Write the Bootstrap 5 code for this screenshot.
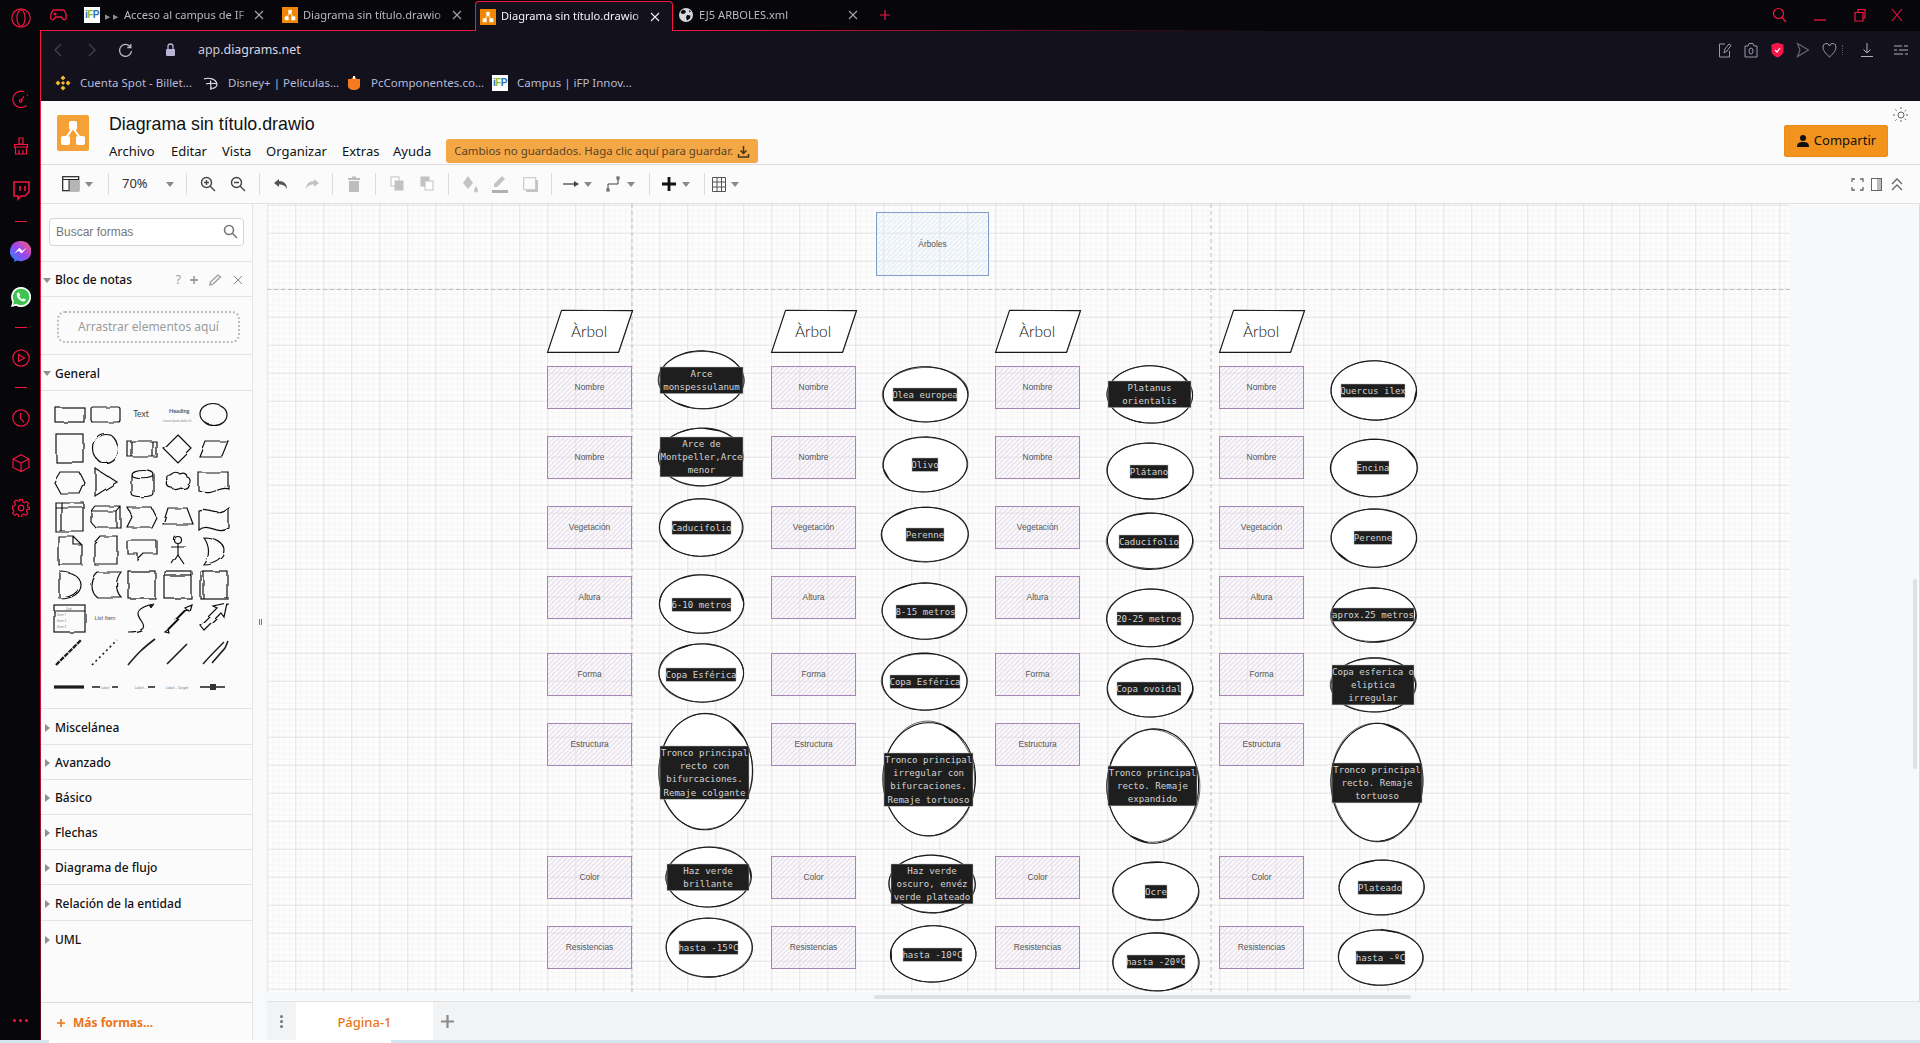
<!DOCTYPE html>
<html lang="es">
<head>
<meta charset="utf-8">
<title>Diagrama sin título.drawio</title>
<link href="https://cdn.jsdelivr.net/npm/bootstrap@5.3.0/dist/css/bootstrap.min.css" rel="stylesheet">
<style>
html,body{height:1043px;overflow:hidden;background:#fff}
body{font-family:"Noto Sans","Liberation Sans",sans-serif;color:#111;font-size:12px}
svg{display:block;flex:none}
.x-shell{height:1040px}
.x-rail{width:41px;flex:none;background:#07060b;position:relative;color:#f0163f}
.x-rail::after{content:"";position:absolute;top:30px;bottom:0;right:0;width:1px;background:linear-gradient(#f5163f,#f5163f 55%,#5a0a1c)}
.x-logo{height:36px;margin-bottom:40px}
.x-ri{height:45px}
.x-ri2{margin-bottom:2px}
.x-rd{height:15px}
.x-rd1{height:16px}
.x-rd i,.x-rd1 i{display:block;width:12px;height:1px;background:#f0163f}
.x-rdots{height:40px;letter-spacing:1px}
.x-rdots i{display:block;width:3px;height:3px;border-radius:50%;background:#f0163f;margin:0 1.5px}
.x-main{min-width:0}
.x-tabbar{height:31px;flex:none;background-color:#07060b;background-image:linear-gradient(90deg,#f5163f 0,#f5163f 640px,#07060b 1230px);background-size:100% 1px;background-position:0 30px;background-repeat:no-repeat;color:#b9b9c4}
.x-game{width:38px;padding-left:9px}
.x-tb{width:198px;height:30px;padding-left:5px;font-size:11.1px;white-space:nowrap}
.x-tb.x-on{margin-top:1px;height:30px;background:#12111c;border:1px solid #f5163f;border-bottom:0;border-radius:4px 4px 0 0;color:#f4f4f8;padding-left:4px}
.x-tbt{width:148px;margin-left:5px;overflow:hidden;-webkit-mask-image:linear-gradient(90deg,#000 132px,transparent 146px);mask-image:linear-gradient(90deg,#000 132px,transparent 146px)}
.x-fav{width:16px;height:16px;flex:none}
.x-ifp{background:#fff;font:700 10px/16px "Liberation Sans",sans-serif;text-align:center;letter-spacing:-.5px;color:#2a6fc0}
.x-ifp b{color:#86c02c}
.x-arr{color:#8d8d96;font-size:7px;letter-spacing:3px;margin-right:3px}
.x-x{width:12px;margin-left:0}
.x-addr{height:38px;flex:none;background:#12111c;color:#c9c8d6;font-size:12.4px}
.x-w34{width:34px}.x-w33{width:33px}.x-w26{width:26px}
.x-book{height:32px;flex:none;background:#12111c;color:#b7bbd8;font-size:11.5px;padding:0 0 4px 14px}
.x-bk{white-space:nowrap;gap:9px}
.x-bk1{width:148px}.x-bk2{width:143px}.x-bk3{width:146px}
.x-head{height:64px;flex:none;background:#fbfbfb;padding-left:16px;position:relative;border-bottom:1px solid #dcdcdc}
.x-dlogo{width:32px;height:36px;margin-top:14px}
.x-title{font:400 17.8px/24px "Liberation Sans",sans-serif;margin-top:11px;color:#111;height:24px}
.x-menu{height:26px;margin-top:3px;font-size:13px}
.x-menu span{white-space:nowrap}
.x-save{background:#f3a745;color:#5a4326;border:0;border-radius:3px;height:24px;padding:0 8px;font-size:11.4px;line-height:24px;margin-top:-2px;margin-left:15px;white-space:nowrap}
.x-share{background:#f2931e;color:#111;border:1px solid #e88c18;border-radius:2px;width:104px;height:32px;font-size:13px;padding:0;margin:24px 32px 0 0}
.x-share:hover{background:#f2931e;color:#111}
.x-sun{position:absolute;right:10px;top:5px}
.x-toolb{height:39px;flex:none;background:#fbfbfb;padding-left:20px;border-bottom:1px solid #e1e1e1;color:#333}
.x-ta{width:47px;padding-left:1px}
.x-z{width:78px;font-size:13px;color:#333}
.x-grp{padding:0 6px;height:22px;border-left:1px solid #dcdcdc}
.x-ic{width:30px;height:22px}
.x-dd{width:0;height:0;border-left:4px solid transparent;border-right:4px solid transparent;border-top:5px solid #8a8a8a;margin-left:5px}
.x-right{margin-left:auto;padding-right:13px;gap:0}
.x-rc{width:20px}
.x-side{width:212px;flex:none;background:#fbfbfb;border-right:1px solid #e4e4e4}
.x-sect{height:58px;padding:14px 8px 0;border-bottom:1px solid #e4e4e4}
.x-search{position:relative}
.x-search .form-control{height:28px;font:12px "Liberation Sans",sans-serif;padding:0 6px;border-color:#d5d5d5;border-radius:4px;background:#fff;color:#777}
.x-search .form-control::placeholder{color:#777}
.x-search svg{position:absolute;right:6px;top:6px}
.x-sh{height:35px;padding:2px 0 0 2px;border-bottom:1px solid #e4e4e4;font-size:12px;font-weight:500;color:#111}
.x-tri{width:0;height:0;border-left:4px solid transparent;border-right:4px solid transparent;border-top:5px solid #8f8f8f;margin-right:4px;flex:none}
.x-tr2{width:0;height:0;border-top:4px solid transparent;border-bottom:4px solid transparent;border-left:5px solid #8f8f8f;margin-right:5px;margin-left:1px}
.x-notes{height:58px;padding:14px 12px 0 16px;border-bottom:1px solid #e4e4e4}
.x-drop{height:32px;border:2px dotted #bdbdbd;border-radius:8px;color:#9b9b9b;font:12px/28px "Noto Sans",sans-serif;text-align:center}
.x-shapes{height:318px;border-bottom:1px solid #e4e4e4}
.x-list .list-group-item{background:transparent;padding:2px 0 0 3px;height:35px;border-color:#e4e4e4;border-width:0 0 1px;font-size:12px;font-weight:500;color:#111}
.x-h36{height:36px!important}
.x-more{height:38px;margin-top:auto;border-top:1px solid #dcdcdc;color:#e8751a;font-weight:700;font-size:12px;padding:2px 0 0 15px;gap:7px}
.x-gut{width:14px;flex:none;background:#f8f9fa}
.x-hnd{width:3px;height:6px;border-left:1px solid #777;border-right:1px solid #777;margin-top:-1px}
.x-work{min-width:0}
.x-area{height:798px;background:#f7f8fa;position:relative;border-bottom:1px solid #e2e2e2}
.x-sbh{position:absolute;left:607px;width:537px;top:791px;height:4px;background:#dfe0e2;border-radius:2px}
.x-sbv{position:absolute;left:1646px;top:375px;width:4px;height:190px;background:#dfe0e2;border-radius:2px}
.x-redge{position:absolute;left:1652px;top:0;bottom:0;width:1px;background:#dcdcdc}
.x-pages{height:38px;background:#f1f3f5}
.x-pd{width:29px;gap:2px}
.x-pd i{display:block;width:3px;height:3px;background:#777;border-radius:50%}
.x-page{width:137px;background:#fff;color:#e8751a;font-weight:500;font-size:13px;padding-top:3px}
.x-pp{width:29px;color:#8a8a8a}
.x-strip{height:3px;background:linear-gradient(90deg,#d3e6ee 49px,#fff 49px,#fff 391px,#d3e6ee 391px)}
</style>
</head>
<body>
<svg width="0" height="0" style="position:absolute"><defs>
<symbol id="dio" viewBox="0 0 32 36"><path fill="none" stroke="#fff" stroke-width="2" d="M16 13 8 24M16 13l8 11"/><rect x="12" y="6" width="8" height="9" rx="2" fill="#fff"/><rect x="4" y="21" width="9" height="9" rx="2" fill="#fff"/><rect x="19" y="21" width="9" height="9" rx="2" fill="#fff"/></symbol>
</defs></svg>
<div class="d-flex x-shell">
 <aside class="x-rail d-flex flex-column align-items-center">
  <div class="x-logo d-flex align-items-center justify-content-center"><svg width="20" height="20" viewBox="0 0 20 20" fill="none" stroke="currentColor" stroke-width="1.2"><circle cx="10" cy="10" r="9.2"/><ellipse cx="10" cy="10" rx="4" ry="8"/></svg></div>
  <div class="x-ri x-ri2 d-flex align-items-center justify-content-center"><svg width="18" height="18" viewBox="0 0 18 18" fill="none" stroke="currentColor" stroke-width="1.2"><path d="M14.5 15.5A8.2 8.2 0 1 1 12 1.7M15 4.5l.8 1.2"/><path d="M9 10.5 12 6"/><circle cx="8.7" cy="10.8" r="1.3"/></svg></div>
  <div class="x-ri d-flex align-items-center justify-content-center"><svg width="16" height="18" viewBox="0 0 16 18" fill="none" stroke="currentColor" stroke-width="1.2"><path d="M6 1h4v6H6zM1.5 7.500h13V10h-13zM2.500 10v7h11v-7M6 13v4M10 13v4"/></svg></div>
  <div class="x-ri d-flex align-items-center justify-content-center"><svg width="18" height="20" viewBox="0 0 18 20" fill="none" stroke="currentColor" stroke-width="1.6"><path d="M2 1h15v10l-4 4H9l-3 3v-3H2zM8 5v5M13 5v5"/></svg></div>
  <div class="x-rd1 d-flex align-items-center"><i></i></div>
  <div class="x-ri d-flex align-items-center justify-content-center"><svg width="21" height="21" viewBox="0 0 20 20"><defs><linearGradient id="ms" x1="0" y1="1" x2="1" y2="0"><stop offset="0" stop-color="#1b8cff"/><stop offset=".5" stop-color="#9b45f0"/><stop offset="1" stop-color="#ff5f6d"/></linearGradient></defs><path fill="url(#ms)" d="M10 0a10 9.600 0 0 0-6 17.300V20l2.700-1.500A10 9.600 0 1 0 10 0z"/><path fill="#fff" d="m4 12 5-5.500 2.800 2.800L16 6.500 11 12 8.300 9.300z"/></svg></div>
  <div class="x-ri d-flex align-items-center justify-content-center"><svg width="20" height="20" viewBox="0 0 20 20"><path fill="#fff" d="M10 0a10 10 0 0 0-8.600 15L0 20l5.200-1.300A10 10 0 1 0 10 0z"/><path fill="#3fc351" d="M10 1.800a8.200 8.200 0 0 0-7 12.500l-.9 3.400 3.500-.9A8.200 8.200 0 1 0 10 1.800z"/><path fill="#fff" d="M7.300 5.500c-.5 0-1.500.7-1.500 2.200 0 3 3.500 6.500 6.700 6.700 1.500 0 2.200-1 2.200-1.900l-2.200-1.200-1 1.100c-1.300-.5-2.600-1.700-3.200-3.100l.9-.9-.9-2.700z"/></svg></div>
  <div class="x-rd1 d-flex align-items-center"><i></i></div>
  <div class="x-ri d-flex align-items-center justify-content-center"><svg width="18" height="18" viewBox="0 0 18 18" fill="none" stroke="currentColor" stroke-width="1.2"><circle cx="9" cy="9" r="8.200"/><path d="M6.500 5.500v7l6-3.500z"/></svg></div>
  <div class="x-rd d-flex align-items-center"><i></i></div>
  <div class="x-ri d-flex align-items-center justify-content-center"><svg width="18" height="18" viewBox="0 0 18 18" fill="none" stroke="currentColor" stroke-width="1.200"><circle cx="9" cy="9" r="8.200"/><path d="M8.500 4v5.500l3.500 3.500"/></svg></div>
  <div class="x-ri d-flex align-items-center justify-content-center"><svg width="18" height="18" viewBox="0 0 18 18" fill="none" stroke="currentColor" stroke-width="1.200"><path d="M9 .8 17 5v8.500l-8 4-8-4V5zM1 5l8 4 8-4M9 9v8.500"/></svg></div>
  <div class="x-ri d-flex align-items-center justify-content-center"><svg width="18" height="18" viewBox="0 0 18 18" fill="none" stroke="currentColor" stroke-width="1.200"><circle cx="9" cy="9" r="2.800"/><path d="M7.500 1h3l.4 2.300 1.700.7 2-1.300 2 2.100-1.300 2 .7 1.700L17.500 9v1.500l-2.300.4-.7 1.700 1.300 2-2 2-2-1.300-1.700.7-.4 2.300h-3l-.4-2.300-1.700-.7-2 1.300-2-2 1.300-2-.7-1.700L.5 10.500V7.500l2.300-.4.700-1.700-1.300-2 2-2 2 1.300 1.700-.7z" transform="translate(0 -.3)"/></svg></div>
  <div class="x-rdots mt-auto d-flex align-items-center justify-content-center"><i></i><i></i><i></i></div>
 </aside>
 <div class="x-main d-flex flex-column flex-grow-1">
  <div class="x-tabbar d-flex align-items-start">
   <div class="x-game d-flex align-items-center" style="height:30px"><svg width="17" height="12" viewBox="0 0 17 12" fill="none" stroke="#f0163f" stroke-width="1.300"><path d="M4 1h9c2 0 3.300 4 3.300 7.500 0 2.500-2.300 3-3.500 1.300L11.500 8h-6L4.200 9.800C3 11.500.7 11 .7 8.500.7 5 2 1 4 1z"/><path d="M3.500 5h3M5 3.500v3"/></svg></div>
   <div class="x-tb d-flex align-items-center"><span class="x-fav x-ifp">i<b>F</b>P</span><div class="x-tbt"><span class="x-arr">▶▶</span>Acceso al campus de IF</div><svg class="x-x" height="12" viewBox="0 0 12 12" stroke="#a5a5ad" stroke-width="1.100"><path d="m2 2 8 8M10 2l-8 8"/></svg></div>
   <div class="x-tb d-flex align-items-center"><svg class="x-fav" style="background:#f08705"><use href="#dio"/></svg><div class="x-tbt">Diagrama sin título.drawio</div><svg class="x-x" height="12" viewBox="0 0 12 12" stroke="#a5a5ad" stroke-width="1.100"><path d="m2 2 8 8M10 2l-8 8"/></svg></div>
   <div class="x-tb x-on d-flex align-items-center"><svg class="x-fav" style="background:#f08705"><use href="#dio"/></svg><div class="x-tbt">Diagrama sin título.drawio</div><svg class="x-x" height="12" viewBox="0 0 12 12" stroke="#eee" stroke-width="1.100"><path d="m2 2 8 8M10 2l-8 8"/></svg></div>
   <div class="x-tb d-flex align-items-center"><svg class="x-fav" viewBox="0 0 16 16"><circle cx="8" cy="8" r="7" fill="#d8d8de"/><path fill="#07060b" d="M5 2.500 8 4l-1 2.500-3 .5L2.500 5zM9 8l3.500.5-.5 3-3 2-1-3zM11 3l2 1.500-1.500 1z"/></svg><div class="x-tbt">EJ5 ARBOLES.xml</div><svg class="x-x" height="12" viewBox="0 0 12 12" stroke="#a5a5ad" stroke-width="1.100"><path d="m2 2 8 8M10 2l-8 8"/></svg></div>
   <div class="d-flex align-items-center ps-2" style="height:30px"><svg width="12" height="12" viewBox="0 0 12 12" stroke="#f0163f" stroke-width="1.200"><path d="M6 1v10M1 6h10"/></svg></div>
   <div class="ms-auto d-flex align-items-center" style="height:30px;padding-right:6px">
    <div class="d-flex justify-content-center" style="width:40px"><svg width="16" height="16" viewBox="0 0 16 16" fill="none" stroke="#f0163f" stroke-width="1.200"><circle cx="6.500" cy="6.500" r="5"/><path d="m10 10.500 4 4.500"/></svg></div>
    <div class="d-flex justify-content-center" style="width:40px"><svg width="14" height="14" viewBox="0 0 14 14" stroke="#f0163f" stroke-width="1.300"><path d="M1 12h12"/></svg></div>
    <div class="d-flex justify-content-center" style="width:40px"><svg width="14" height="14" viewBox="0 0 14 14" fill="none" stroke="#f0163f" stroke-width="1.200"><path d="M2 4.500h8V13H2zM5 4.500V1.500h7V10h-2"/></svg></div>
    <div class="d-flex justify-content-center" style="width:34px"><svg width="14" height="14" viewBox="0 0 14 14" stroke="#f0163f" stroke-width="1.100"><path d="m2 1 10 12M12 1 2 13"/></svg></div>
   </div>
  </div>
  <div class="x-addr d-flex align-items-center">
   <div class="x-w34 d-flex justify-content-center"><svg width="10" height="16" viewBox="0 0 10 16" fill="none" stroke="#44434f" stroke-width="1.300"><path d="M8 2 2 8l6 6"/></svg></div>
   <div class="x-w34 d-flex justify-content-center"><svg width="10" height="16" viewBox="0 0 10 16" fill="none" stroke="#44434f" stroke-width="1.300"><path d="m2 2 6 6-6 6"/></svg></div>
   <div class="x-w33 d-flex justify-content-center"><svg width="15" height="15" viewBox="0 0 15 15" fill="none" stroke="#b9b8c6" stroke-width="1.300"><path d="M12.500 4A6 6 0 1 0 13.500 8M12.800 1v3.500H9.300"/></svg></div>
   <div class="d-flex justify-content-center" style="width:56px"><svg width="11" height="14" viewBox="0 0 11 14"><path fill="none" stroke="#b8b4d4" stroke-width="1.300" d="M3 6V3.500a2.500 2.500 0 0 1 5 0V6"/><rect x="1" y="6" width="9" height="7" rx="1" fill="#b8b4d4"/></svg></div>
   <div>app.<span style="color:#d9d8e4">diagrams.net</span></div>
   <div class="ms-auto d-flex align-items-center" style="padding-right:2px">
    <div class="x-w26 d-flex justify-content-center"><svg width="14" height="16" viewBox="0 0 14 16" fill="none" stroke="#9a99a8"><path d="M7 2H1.500v13h10V9M6 11l1-4 4-5 2 1.500L9 9z"/></svg></div>
    <div class="x-w26 d-flex justify-content-center"><svg width="14" height="16" viewBox="0 0 14 16" fill="none" stroke="#9a99a8"><path d="M1 4h3l1-2.500h4L10 4h3v11H1z"/><ellipse cx="7" cy="9" rx="2" ry="3"/></svg></div>
    <div class="x-w26 d-flex justify-content-center"><svg width="13" height="16" viewBox="0 0 13 16"><path fill="#f5164a" d="M6.500.8 12.500 2.500V9c0 3-3 5.500-6 6.500-3-1-6-3.500-6-6.500V2.500z"/><path fill="none" stroke="#fff" stroke-width="1.200" d="m4 8 2 2 3-4"/></svg></div>
    <div class="x-w26 d-flex justify-content-center"><svg width="14" height="16" viewBox="0 0 14 16" fill="none" stroke="#666573" stroke-width="1.200"><path d="m1.500 1.500 11 6.500-11 6.500L4 8z"/></svg></div>
    <div class="x-w26 d-flex justify-content-center"><svg width="15" height="16" viewBox="0 0 15 16" fill="none" stroke="#9a99a8"><path d="M7.500 15C3 11 1 8 1 5a3.300 3.300 0 0 1 6.500-1A3.300 3.300 0 0 1 14 5c0 3-2 6-6.500 10z"/></svg></div>
    <div style="width:8px;height:10px;border-left:1px dotted #55545f"></div>
    <div class="x-w34 d-flex justify-content-center"><svg width="14" height="16" viewBox="0 0 14 16" fill="none" stroke="#b0afbc"><path d="M7 1v10M3.500 7.500 7 11l3.500-3.500M1 14.500h12"/></svg></div>
    <div class="x-w34 d-flex justify-content-center"><svg width="14" height="14" viewBox="0 0 14 14" fill="none" stroke="#b0afbc"><path d="M0 3h14M0 7h14M0 11h14"/><path stroke-width="2" stroke="#12111c" d="M9 2v2M4 6v2M10 10v2"/></svg></div>
   </div>
  </div>
  <div class="x-book d-flex align-items-center">
   <div class="x-bk x-bk1 d-flex align-items-center"><svg class="x-fav" viewBox="0 0 16 16" fill="#f3ba2f"><path d="m8 .5 2.500 2.500L8 5.300 5.500 3zM3 5.500 5.300 8 3 10.500.500 8zM13 5.500 15.500 8 13 10.500 10.700 8zM8 6l2 2-2 2-2-2zM8 10.700l2.500 2.300L8 15.500 5.500 13z"/></svg><span>Cuenta Spot - Billet...</span></div>
   <div class="x-bk x-bk2 d-flex align-items-center"><svg class="x-fav" viewBox="0 0 16 16" fill="none" stroke="#e7e7ef" stroke-width="1.100"><path d="M1 4c5-2 12 0 13 5 .5 3-3 5-7 4"/><path d="M7.500 5.500 8 15"/><path d="M3 9c2-1 9-1 11 0"/></svg><span>Disney+ | Películas...</span></div>
   <div class="x-bk x-bk3 d-flex align-items-center"><svg class="x-fav" viewBox="0 0 16 16"><path fill="#f47b20" d="M2 4h3l3-3 3 3h3v7c0 2.500-3 4-6 4s-6-1.500-6-4z"/><path fill="#fff" d="M7 1h2v3H7z"/></svg><span>PcComponentes.co...</span></div>
   <div class="x-bk d-flex align-items-center"><span class="x-fav x-ifp">i<b>F</b>P</span><span>Campus | iFP Innov...</span></div>
  </div>
  <header class="x-head d-flex">
   <svg class="x-dlogo" style="background:#f4a137;border-radius:2px"><use href="#dio"/></svg>
   <div style="margin-left:20px">
    <div class="x-title">Diagrama sin título.drawio</div>
    <div class="x-menu d-flex align-items-center">
     <span style="width:62px">Archivo</span><span style="width:51px">Editar</span><span style="width:44px">Vista</span><span style="width:76px">Organizar</span><span style="width:51px">Extras</span><span>Ayuda</span>
     <button type="button" class="btn x-save d-flex align-items-center gap-1">Cambios no guardados. Haga clic aquí para guardar.<svg width="13" height="13" viewBox="0 0 13 13" fill="none" stroke="#4a3416" stroke-width="1.500"><path d="M6.500 1v7M3.500 5.500l3 3 3-3M1.500 9v3h10V9"/></svg></button>
    </div>
   </div>
   <button type="button" class="btn x-share ms-auto d-flex align-items-center justify-content-center gap-1"><svg width="14" height="14" viewBox="0 0 14 14" fill="#111"><circle cx="7" cy="4" r="3"/><path d="M1 13c0-4 2-5 6-5s6 1 6 5z"/></svg>Compartir</button>
   <svg class="x-sun" width="18" height="18" viewBox="0 0 18 18" fill="none" stroke="#666"><circle cx="9" cy="9" r="3"/><path stroke-dasharray="2 1" d="M9 1v3M9 14v3M1 9h3M14 9h3M3.300 3.300l2 2M12.700 12.700l2 2M3.300 14.700l2-2M12.700 5.300l2-2"/></svg>
  </header>
  <div class="x-toolb d-flex align-items-center">
   <div class="x-ta d-flex align-items-center"><svg width="18" height="16" viewBox="0 0 18 16"><rect x=".7" y=".7" width="16" height="14" fill="#fff" stroke="#222" stroke-width="1.200"/><rect x="7" y="3" width="10" height="12" fill="#b5b5b5"/><path d="M1 3.500h16M7 3.500V15" stroke="#222"/></svg><i class="x-dd"></i></div>
   <div class="x-z x-grp d-flex align-items-center" style="padding:0 0 0 13px">70%<i class="x-dd" style="margin-left:18px"></i></div>
   <div class="x-grp d-flex align-items-center"><div class="x-ic d-flex align-items-center justify-content-center"><svg width="16" height="16" viewBox="0 0 16 16" fill="none" stroke="#444" stroke-width="1.400"><circle cx="6.500" cy="6.500" r="5"/><path d="m10 10 5 5M4 6.500h5M6.500 4v5"/></svg></div><div class="x-ic d-flex align-items-center justify-content-center"><svg width="16" height="16" viewBox="0 0 16 16" fill="none" stroke="#444" stroke-width="1.400"><circle cx="6.500" cy="6.500" r="5"/><path d="m10 10 5 5M4 6.500h5"/></svg></div></div>
   <div class="x-grp d-flex align-items-center"><div class="x-ic d-flex align-items-center justify-content-center"><svg width="15" height="12" viewBox="0 0 15 12" fill="#555"><path d="M5 1 0 5l5 4V6.500c4 0 6 1 8 4.500 0-5-3-8-8-8z"/></svg></div><div class="x-ic d-flex align-items-center justify-content-center"><svg width="15" height="12" viewBox="0 0 15 12" fill="#c4c4c4"><path d="m10 1 5 4-5 4V6.500c-4 0-6 1-8 4.500 0-5 3-8 8-8z"/></svg></div></div>
   <div class="x-grp d-flex align-items-center"><div class="x-ic d-flex align-items-center justify-content-center"><svg width="14" height="16" viewBox="0 0 14 16" fill="#bdbdbd"><path d="M1 2h4V.5h4V2h4v2H1zM2 5h10v11H2z"/></svg></div></div>
   <div class="x-grp d-flex align-items-center"><div class="x-ic d-flex align-items-center justify-content-center"><svg width="15" height="16" viewBox="0 0 15 16"><rect x="1" y="1" width="8" height="9" fill="#fff" stroke="#c2c2c2"/><rect x="5" y="5" width="8" height="9" fill="#c2c2c2" stroke="#c2c2c2"/></svg></div><div class="x-ic d-flex align-items-center justify-content-center"><svg width="15" height="16" viewBox="0 0 15 16"><rect x="1" y="1" width="8" height="9" fill="#c2c2c2" stroke="#c2c2c2"/><rect x="5" y="5" width="8" height="9" fill="#fff" stroke="#c2c2c2"/></svg></div></div>
   <div class="x-grp d-flex align-items-center"><div class="x-ic d-flex align-items-center justify-content-center"><svg width="16" height="17" viewBox="0 0 16 17" fill="#c4c4c4"><path d="M6 0 1 7l5 6 5-6zM14 10c1 2 2 3 2 4.500a2 2 0 0 1-4 0c0-1.500 1-2.500 2-4.500z"/></svg></div><div class="x-ic d-flex align-items-center justify-content-center"><svg width="18" height="18" viewBox="0 0 18 18" fill="#c4c4c4"><path d="M11 1l3 3-8 8H3V9z"/><path d="M1 15h16v3H1z" fill="#b0b0b0"/></svg></div><div class="x-ic d-flex align-items-center justify-content-center"><svg width="15" height="15" viewBox="0 0 15 15"><rect x="3" y="3" width="12" height="12" fill="#c4c4c4"/><rect x=".7" y=".7" width="12" height="12" fill="#fbfbfb" stroke="#c4c4c4"/></svg></div></div>
   <div class="x-grp d-flex align-items-center"><div class="d-flex align-items-center" style="width:45px;padding-left:5px"><svg width="17" height="10" viewBox="0 0 17 10"><path d="M0 5h12" stroke="#444" stroke-width="1.300"/><path d="m11 2 5 3-5 3z" fill="#444"/></svg><i class="x-dd" style="margin-left:4px"></i></div><div class="d-flex align-items-center" style="width:40px;padding-left:3px"><svg width="16" height="16" viewBox="0 0 16 16" fill="none" stroke="#444"><path d="M2 14V8h10V2"/><rect x="1" y="13" width="2" height="2" fill="#fff"/><rect x="11" y="1" width="2" height="2" fill="#fff"/></svg><i class="x-dd" style="margin-left:5px"></i></div></div>
   <div class="x-grp d-flex align-items-center"><div class="d-flex align-items-center" style="width:42px;padding-left:6px"><svg width="14" height="14" viewBox="0 0 14 14" stroke="#111" stroke-width="2.800"><path d="M7 0v14M0 7h14"/></svg><i class="x-dd" style="margin-left:6px"></i></div></div>
   <div class="x-grp d-flex align-items-center"><div class="d-flex align-items-center" style="padding-left:1px"><svg width="14" height="15" viewBox="0 0 14 15" fill="none" stroke="#555"><path d="M.5.500h13v14H.5zM.5 5h13M.5 10h13M5 .5v14M9.500.5v14"/></svg><i class="x-dd"></i></div></div>
   <div class="x-right d-flex align-items-center">
    <div class="x-rc d-flex justify-content-center"><svg width="13" height="13" viewBox="0 0 13 13" fill="none" stroke="#666" stroke-width="1.300"><path d="M1 4V1h3M9 1h3v3M1 9v3h3M9 12h3V9"/></svg></div>
    <div class="x-rc d-flex justify-content-center"><svg width="12" height="13" viewBox="0 0 12 13"><rect x=".5" y=".5" width="10" height="12" fill="#fff" stroke="#666"/><rect x="6" y="1" width="4" height="11" fill="#bbb"/></svg></div>
    <div class="x-rc d-flex justify-content-center"><svg width="12" height="13" viewBox="0 0 12 13" fill="none" stroke="#666" stroke-width="1.300"><path d="m1 6 5-5 5 5M1 12l5-5 5 5"/></svg></div>
   </div>
  </div>
  <div class="x-work d-flex flex-grow-1">
   <aside class="x-side d-flex flex-column">
    <div class="x-sect"><div class="x-search"><input class="form-control" type="text" placeholder="Buscar formas" aria-label="Buscar formas"><svg width="15" height="15" viewBox="0 0 15 15" fill="none" stroke="#777" stroke-width="1.600"><circle cx="6" cy="6" r="4.500"/><path d="m9.500 9.500 4.500 4.500"/></svg></div></div>
    <div class="x-sh d-flex align-items-center"><i class="x-tri"></i>Bloc de notas
     <div class="ms-auto d-flex align-items-center" style="color:#9a9a9a;font-size:12px;font-weight:400;padding-right:9px;gap:8px"><span>?</span><svg width="10" height="10" viewBox="0 0 10 10" stroke="#888" stroke-width="1.300"><path d="M5 1v8M1 5h8"/></svg><svg width="13" height="12" viewBox="0 0 13 12" fill="none" stroke="#999" stroke-width="1.300" style="margin-left:2px"><path d="M1 11l.5-3L9 1l2.500 2L4 10z"/></svg><svg width="10" height="10" viewBox="0 0 10 10" stroke="#888" style="margin-left:3px"><path d="m1 1 8 8M9 1 1 9"/></svg></div></div>
    <div class="x-notes"><div class="x-drop">Arrastrar elementos aquí</div></div>
    <div class="x-sh d-flex align-items-center" style="height:36px"><i class="x-tri"></i>General</div>
    <div class="x-shapes">
     <svg width="211" height="317" viewBox="41 391 211 317">
      <defs><filter id="rough" x="-5%" y="-5%" width="110%" height="110%"><feTurbulence baseFrequency=".045" numOctaves="1" seed="4"/><feDisplacementMap in="SourceGraphic" scale="1.300"/></filter></defs>
      <g fill="none" stroke="#111" stroke-width="1.200" filter="url(#rough)">
       <rect x="55" y="407" width="29" height="15"/><rect x="91" y="407" width="29" height="15" rx="2"/><ellipse cx="213" cy="414" rx="13" ry="10.500"/>
       <rect x="56" y="434" width="27" height="28"/><ellipse cx="105" cy="448" rx="12.500" ry="14.500"/><path d="M127 441h29v15h-29zM131 441v15M152 441v15"/><path d="m177 434 14 14-14 14-14-14zM205 441h23l-6 15h-23z"/>
       <path d="M60 472h19l5 10-5 11H60l-6-11zM95 468l22 14-22 14zM131 474c0-6 22-6 22 0v19c0 5-22 5-22 0zM131 474c0 5 22 5 22 0"/><path d="M170 475c4-4 8-3 10-1 4-2 7 0 7 3 4 1 4 6 1 8-1 4-6 4-8 2-4 2-8 2-10-1-5 0-6-5-3-7-1-2 0-4 3-4zM198 472h30v16c-10-4-15 8-30 2z"/>
       <path d="M55 502h28v29H55zM55 507h28M61 502v29M91 511l4-5h25v21H95l-4-5zm0 0h25v16M116 511l4-5"/><path d="M127 507h24l5 10-5 10h-24l5-10zM168 508h19l6 16h-30zM198 510c10-4 18 8 30-3v20c-12 8-20-6-30 2z"/>
       <path d="M58 536h15l8 8v20H58zM73 536v8h8M100 536h17v28H94v-21zM127 540h29v13h-13l-6 6v-6h-10z"/><circle cx="177" cy="539" r="3.500"/><path d="M177 543v11M170 546h15M177 554l-6 9M177 554l6 9M203 537c12 0 21 6 21 13s-9 14-21 14c6-8 6-19 0-27z"/>
       <path d="M59 571c12 0 21 5 21 13s-9 14-21 14zM97 572h24c-6 8-6 18 0 25H97c-8-6-8-18 0-25z"/><rect x="128" y="571" width="27" height="27"/><rect x="164" y="571" width="27" height="27"/><path d="M164 575h27"/><rect x="200" y="571" width="27" height="27"/><path d="M203 571v27"/>
       <rect x="54" y="605" width="31" height="27"/><path d="M54 611h31M128 632c12 0 19-3 14-10s-8-12 7-17"/>
       <path d="m164 631 4 1-1-4 19-19-2-2 7-3-2 7-2-2-19 19zM200 625l17-17-4-2 14-3-3 14-3-4-17 17z"/>
      </g>
      <path fill="#1d1d1d" stroke="#1d1d1d" d="m149 605 5-1-3 4z"/>
      <g stroke="#1d1d1d" fill="none">
       <path d="M56 665l25-25" stroke-width="2.400" stroke-dasharray="5 1"/><path d="M92 665l25-25" stroke-width="1.600" stroke-dasharray="2 3"/><path d="M128 665c10-12 14-16 27-26" stroke-width="1.600"/><path d="M167 664l20-20M212 663l13-15 3-7" stroke-width="1.600"/><path d="M203 664c6-7 9-10 21-22" stroke-width="1.400"/>
       <path d="M54 687h30" stroke-width="3.200"/><path d="M92 687h8M112 687h6M148 687h7M200 687h25" stroke-width="1.500"/>
      </g>
      <text x="141" y="417" text-anchor="middle" font-family="Lato,sans-serif" font-size="8.500" fill="#444">Text</text>
      <text x="169" y="413" font-family="Lato,sans-serif" font-size="5.500" font-weight="700" fill="#556">Heading</text>
      <text x="163" y="422" font-family="Lato,sans-serif" font-size="3" fill="#889">Lorem ipsum dolor sit</text>
      <text x="69" y="610" text-anchor="middle" font-size="3.500" fill="#667">List</text>
      <text x="57" y="616" font-size="3" fill="#778">Item 1</text><text x="57" y="622" font-size="3" fill="#778">Item 2</text><text x="57" y="628" font-size="3" fill="#778">Item 3</text>
      <text x="105" y="620" text-anchor="middle" font-family="Lato,sans-serif" font-size="5.500" fill="#556">List Item</text>
      <text x="105" y="689" text-anchor="middle" font-size="3.500" fill="#778">Label</text>
      <text x="141" y="689" text-anchor="middle" font-size="3.500" fill="#778">Label ...</text><text x="177" y="689" text-anchor="middle" font-size="3.500" fill="#778">Label ...Target</text>
      <rect x="210" y="684" width="6" height="6" fill="#333"/>
     </svg>
    </div>
    <ul class="list-group list-group-flush x-list">
     <li class="list-group-item x-h36 d-flex align-items-center"><i class="x-tr2"></i>Miscelánea</li>
     <li class="list-group-item d-flex align-items-center"><i class="x-tr2"></i>Avanzado</li>
     <li class="list-group-item d-flex align-items-center"><i class="x-tr2"></i>Básico</li>
     <li class="list-group-item d-flex align-items-center"><i class="x-tr2"></i>Flechas</li>
     <li class="list-group-item d-flex align-items-center"><i class="x-tr2"></i>Diagrama de flujo</li>
     <li class="list-group-item x-h36 d-flex align-items-center"><i class="x-tr2"></i>Relación de la entidad</li>
     <li class="list-group-item d-flex align-items-center"><i class="x-tr2"></i>UML</li>
    </ul>
    <div class="x-more d-flex align-items-center"><svg width="10" height="10" viewBox="0 0 10 10" stroke="#e8751a" stroke-width="1.600"><path d="M5 1v8M1 5h8"/></svg>Más formas...</div>
   </aside>
   <div class="x-gut d-flex align-items-center justify-content-center"><i class="x-hnd"></i></div>
   <div class="flex-grow-1 d-flex flex-column x-work">
    <div class="x-area">
     <svg id="dgm" width="1523" height="788" viewBox="267 204 1523 788" font-family="'Liberation Sans',sans-serif"></svg>
     <i class="x-sbh"></i><i class="x-sbv"></i><i class="x-redge"></i>
    </div>
    <div class="x-pages d-flex">
     <div class="x-pd d-flex flex-column align-items-center justify-content-center"><i></i><i></i><i></i></div>
     <div class="x-page d-flex align-items-center justify-content-center">Página-1</div>
     <div class="x-pp d-flex align-items-center justify-content-center"><svg width="13" height="13" viewBox="0 0 13 13" stroke="#8a8a8a" stroke-width="2.200"><path d="M6.500 0v13M0 6.500h13"/></svg></div>
    </div>
   </div>
  </div>
 </div>
</div>
<div class="x-strip"></div>
<script>
(function(){
var s=7;function rnd(){s=(s*16807)%2147483647;return s/2147483647}
function blob(x1,x2,y1,y2,a){var cx=(x1+x2)/2,cy=(y1+y2)/2,rx=(x2-x1)/2,ry=(y2-y1)/2,p1=rnd()*6.3,p2=rnd()*6.3,st=rnd()*6.3,d='';
 for(var i=0;i<=64;i++){var t=st+i/60*6.283,k=1+a*Math.sin(2*t+p1)+a*.7*Math.sin(3*t+p2);
  d+=(i?'L':'M')+(cx+rx*k*Math.cos(t)).toFixed(1)+' '+(cy+ry*k*Math.sin(t)).toFixed(1)}
 return d}
var o='<defs><pattern id="grid" patternUnits="userSpaceOnUse" x="267.3" y="204.7" width="28" height="28"><path fill="none" stroke="#f5f5f5" d="M5.600 0v28M11.200 0v28M16.800 0v28M22.400 0v28M0 5.600h28M0 11.200h28M0 16.800h28M0 22.400h28"/><path fill="none" stroke="#e3e3e3" d="M.5 0v28M0 .5h28"/></pattern>'+
 '<pattern id="hp" patternUnits="userSpaceOnUse" width="3.400" height="6" patternTransform="rotate(45)"><path d="M1 0v6" stroke="#e1d5e7" stroke-width="1"/></pattern>'+
 '<pattern id="hb" patternUnits="userSpaceOnUse" width="3.400" height="6" patternTransform="rotate(45)"><path d="M1 0v6" stroke="#dae8fc" stroke-width="1"/></pattern></defs>'+
 '<rect x="267" y="204" width="1523" height="788" fill="#fdfdfd"/><rect x="267" y="204" width="1523" height="788" fill="url(#grid)"/>'+
 '<path d="M632 204v788M1211 204v788M267 289.500h1523" stroke="#bdbdbd" stroke-dasharray="4 3" fill="none"/>';
function box(x,y,w,h,t,f,c){return '<rect x="'+x+'" y="'+y+'" width="'+w+'" height="'+h+'" fill="url(#'+f+')" stroke="'+c+'"/><text x="'+(x+w/2)+'" y="'+(y+h/2+2.500)+'" text-anchor="middle" font-size="8.400" fill="#555">'+t+'</text>'}
o+=box(876.500,212.500,112,63,'Árboles','hb','#7f9ccb');
var rows=[['Nombre',366],['Nombre',436],['Vegetación',506],['Altura',576],['Forma',653],['Estructura',723],['Color',856],['Resistencias',926]];
[547,771,995,1219].forEach(function(x){
 var l=x+.5;
 o+='<path d="M'+(l+14)+' 310.500H'+(l+85)+'L'+(l+71)+' 352.500H'+l+'Z" fill="#fff" stroke="#111" stroke-width="1.100"/><path d="M'+(l+14)+' 310L'+(l+85)+' 311L'+(l+71.500)+' 352L'+(l-.5)+' 352" fill="none" stroke="#333" stroke-width=".6"/>';
 o+='<text x="'+(x+42)+'" y="337" text-anchor="middle" font-family="Lato,sans-serif" font-weight="300" font-size="15.500" fill="#111">Àrbol</text>';
 rows.forEach(function(r){o+=box(l,r[1]+.5,84,42,r[0],'hp','#a585b5')});
});
var E=[
[659,744,351,409,660,743,367,['Arce','monspessulanum']],
[659,743,428,486,660,743,437,['Arce de','Montpeller,Arce','menor']],
[659,743,499,556,672,731,521,['Caducifolio']],
[659,744,575,633,672,731,598,['6-10 metros']],
[659,744,644,702,666,736,668,['Copa Esférica']],
[659,752,713,830,660,749,746,['Tronco principal','recto con','bifurcaciones.','Remaje colgante']],
[666,751,847,907,667,749,864,['Haz verde','brillante']],
[666,752,918,977,679,738,941,['hasta -15ºC']],
[883,968,367,422,893,957,388,['Olea europea']],
[883,967,437,492,912,938,458,['Olivo']],
[882,968,507,562,906,944,528,['Perenne']],
[882,967,583,639,896,955,605,['8-15 metros']],
[882,967,653,710,890,960,675,['Copa Esférica']],
[883,975,722,836,884,973,753,['Tronco principal','irregular con','bifurcaciones.','Remaje tortuoso']],
[889,975,855,913,891,973,864,['Haz verde','oscuro, envéz','verde plateado']],
[890,976,926,982,903,962,948,['hasta -10ºC']],
[1107,1193,366,423,1108,1191,381,['Platanus','orientalis']],
[1107,1193,443,499,1130,1168,465,['Plátano']],
[1107,1193,513,569,1119,1179,535,['Caducifolio']],
[1107,1193,589,647,1117,1181,612,['20-25 metros']],
[1107,1193,659,717,1117,1181,682,['Copa ovoidal']],
[1107,1199,729,843,1108,1197,766,['Tronco principal','recto. Remaje','expandido']],
[1113,1199,862,920,1145,1167,885,['Ocre']],
[1113,1199,933,991,1127,1185,955,['hasta -20ºC']],
[1331,1417,361,420,1341,1405,384,['Quercus ilex']],
[1331,1417,439,497,1357,1389,461,['Encina']],
[1331,1417,509,567,1354,1392,531,['Perenne']],
[1331,1416,588,642,1332,1414,608,['aprox.25 metros']],
[1331,1416,658,712,1332,1414,665,['Copa esferica o','eliptica','irregular']],
[1331,1423,723,841,1332,1422,763,['Tronco principal','recto. Remaje','tortuoso']],
[1339,1424,860,915,1358,1402,881,['Plateado']],
[1338,1423,930,985,1356,1405,951,['hasta -ºC']]];
E.forEach(function(e){
 o+='<path d="'+blob(e[0],e[1],e[2],e[3],.008)+'Z" fill="#fff" stroke="#111" stroke-width="1.100"/><path d="'+blob(e[0],e[1],e[2],e[3],.012)+'" fill="none" stroke="#222" stroke-width=".7"/>';
 var n=e[7].length,h=n*13.3;
 o+='<rect x="'+e[4]+'" y="'+e[6]+'" width="'+(e[5]-e[4])+'" height="'+h+'" fill="#1e1e1e" stroke="#b5b5b5" stroke-width=".5"/>';
 e[7].forEach(function(t,i){o+='<text x="'+((e[4]+e[5])/2)+'" y="'+(e[6]+13.3*i+9.8)+'" text-anchor="middle" font-family="\'DejaVu Sans Mono\',monospace" font-size="9.100" fill="#d4d4d4">'+t+'</text>'});
});
document.getElementById('dgm').innerHTML=o;
})();
</script>
</body>
</html>
